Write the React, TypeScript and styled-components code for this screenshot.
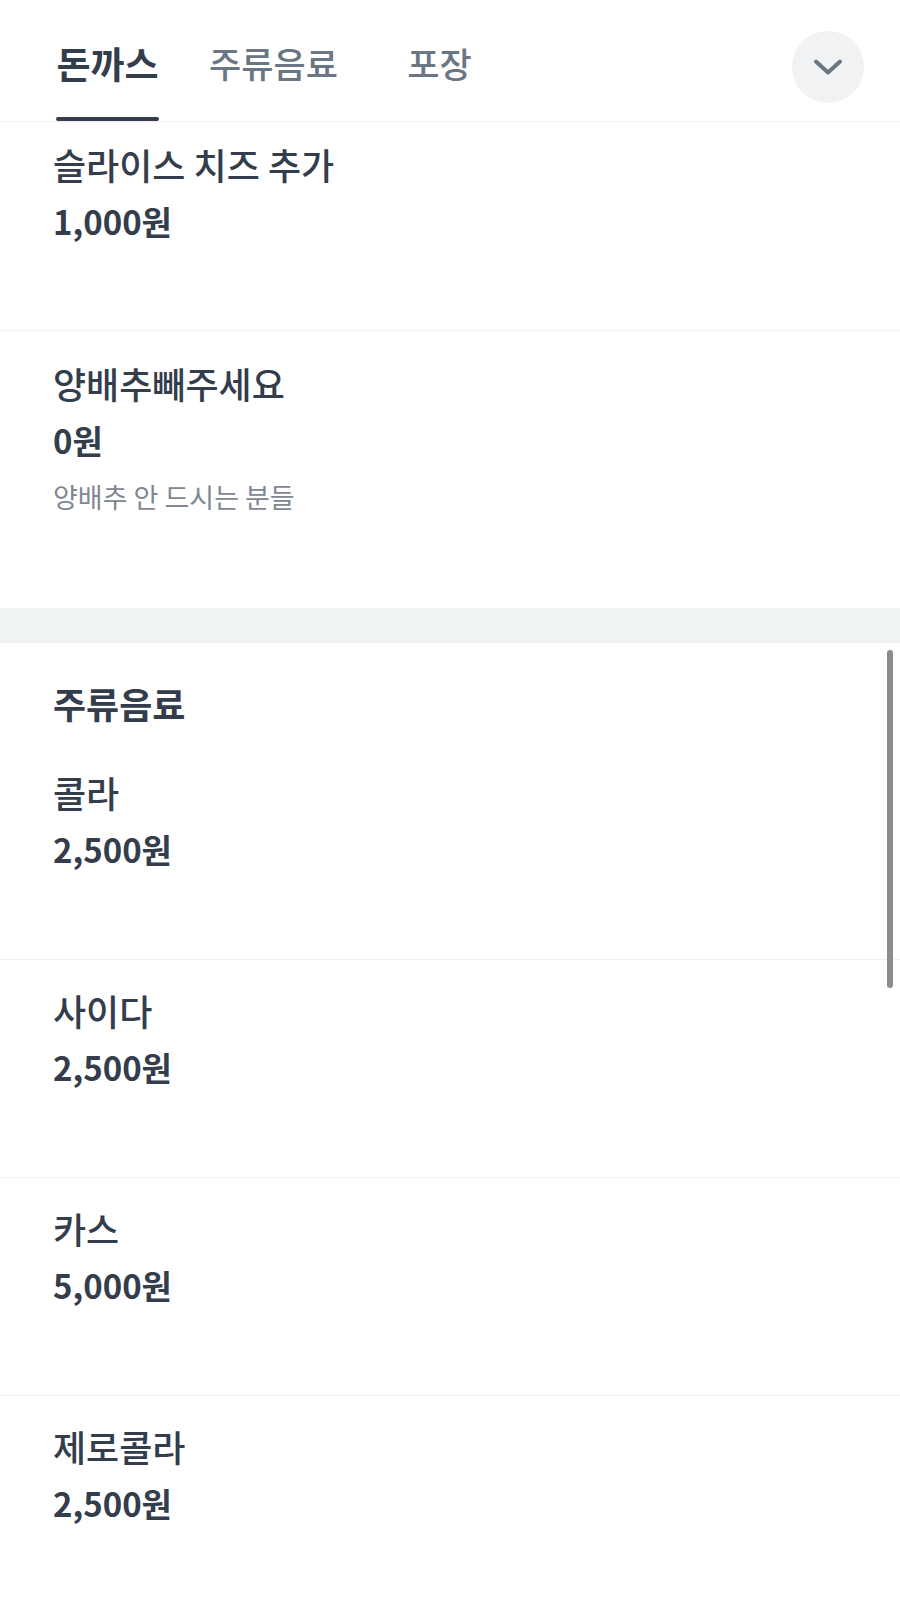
import React from "react";
import styled, { createGlobalStyle } from "styled-components";

const GlobalStyle = createGlobalStyle`
  * { box-sizing: border-box; }
  html, body { margin: 0; padding: 0; background: #ffffff; }
  body {
    font-family: "Noto Sans CJK KR", "Noto Sans", sans-serif;
    color: #333d4b;
    -webkit-font-smoothing: antialiased;
  }
`;

const Page = styled.div`
  position: relative;
  width: 900px;
  min-height: 1600px;
  overflow: hidden;
  background: #ffffff;
`;

const Header = styled.header`
  display: flex;
  align-items: flex-start;
  height: 122px;
  padding-left: 32px;
  padding-right: 36px;
  border-bottom: 1px solid #eef0f3;
  background: #ffffff;
`;

const TabList = styled.nav`
  display: flex;
  gap: 15px;
  height: 121px;
`;

const Tab = styled.div`
  display: flex;
  justify-content: center;
  width: 151px;
  height: 100%;
`;

const TabInner = styled.div`
  display: flex;
  flex-direction: column;
  height: 100%;
  padding: 9px 2px 0;
`;

const TabLabel = styled.span<{ $active?: boolean }>`
  flex: 1;
  display: flex;
  align-items: center;
  justify-content: center;
  font-size: ${(p) => (p.$active ? 37 : 35)}px;
  line-height: 48px;
  font-weight: ${(p) => (p.$active ? 700 : 500)};
  color: ${(p) => (p.$active ? "#333d4b" : "#6b7684")};
  white-space: nowrap;
`;

const Indicator = styled.span<{ $active?: boolean }>`
  display: block;
  height: 4px;
  border-radius: 2px;
  background: ${(p) => (p.$active ? "#333d4b" : "transparent")};
`;

const DropButton = styled.button`
  margin-left: auto;
  margin-top: 31px;
  width: 72px;
  height: 72px;
  border: none;
  border-radius: 50%;
  background: #f0f2f4;
  display: flex;
  align-items: center;
  justify-content: center;
  padding: 0;
  cursor: pointer;
`;

const Section = styled.section<{ $padTop?: number }>`
  display: flex;
  flex-direction: column;
  padding-top: ${(p) => p.$padTop ?? 0}px;
`;

const SectionTitle = styled.h2`
  margin: 0 0 15px;
  padding: 0 53px;
  font-size: 36px;
  line-height: 48px;
  font-weight: 700;
  color: #333d4b;
`;

const Band = styled.div`
  height: 35px;
  background: #f0f3f4;
`;

const ItemRow = styled.div<{ $divider?: boolean; $padTop?: number; $padBottom?: number }>`
  display: flex;
  flex-direction: column;
  padding: ${(p) => p.$padTop ?? 26}px 53px ${(p) => p.$padBottom ?? 86}px;
  border-top: ${(p) => (p.$divider ? "1px solid #eef0f3" : "none")};
`;

const ItemName = styled.div`
  font-size: 36px;
  line-height: 48px;
  font-weight: 500;
  color: #333d4b;
`;

const ItemPrice = styled.div`
  margin-top: 9px;
  font-size: 33px;
  line-height: 48px;
  font-weight: 700;
  color: #333d4b;
`;

const ItemDesc = styled.div`
  margin-top: 15px;
  font-size: 27px;
  line-height: 36px;
  font-weight: 400;
  color: #7e8792;
`;

const ScrollThumb = styled.div`
  position: absolute;
  right: 7px;
  top: 650px;
  width: 6px;
  height: 338px;
  border-radius: 3px;
  background: #8c8c8c;
`;

type Item = { name: string; price: string; desc?: string };

const tabs = ["돈까스", "주류음료", "포장"];

const drinks: Item[] = [
  { name: "콜라", price: "2,500원" },
  { name: "사이다", price: "2,500원" },
  { name: "카스", price: "5,000원" },
  { name: "제로콜라", price: "2,500원" },
];

const Chevron = () => (
  <svg width="32" height="18" viewBox="0 0 32 18" fill="none">
    <path
      d="M4 3.5 L16 14.5 L28 3.5"
      stroke="#6b7684"
      strokeWidth="4"
      strokeLinecap="round"
      strokeLinejoin="round"
    />
  </svg>
);

export default function App() {
  return (
    <Page>
      <GlobalStyle />
      <Header>
        <TabList>
          {tabs.map((t, i) => (
            <Tab key={t}>
              <TabInner>
                <TabLabel $active={i === 0}>{t}</TabLabel>
                <Indicator $active={i === 0} />
              </TabInner>
            </Tab>
          ))}
        </TabList>
        <DropButton aria-label="카테고리 펼치기">
          <Chevron />
        </DropButton>
      </Header>

      <Section>
        <ItemRow $padTop={18} $padBottom={85}>
          <ItemName>슬라이스 치즈 추가</ItemName>
          <ItemPrice>1,000원</ItemPrice>
        </ItemRow>
        <ItemRow $divider $padTop={28} $padBottom={93}>
          <ItemName>양배추빼주세요</ItemName>
          <ItemPrice>0원</ItemPrice>
          <ItemDesc>양배추 안 드시는 분들</ItemDesc>
        </ItemRow>
      </Section>

      <Band />

      <Section $padTop={36}>
        <SectionTitle>주류음료</SectionTitle>
        {drinks.map((d, i) => (
          <ItemRow key={d.name} $divider={i > 0}>
            <ItemName>{d.name}</ItemName>
            <ItemPrice>{d.price}</ItemPrice>
          </ItemRow>
        ))}
      </Section>

      <ScrollThumb />
    </Page>
  );
}
